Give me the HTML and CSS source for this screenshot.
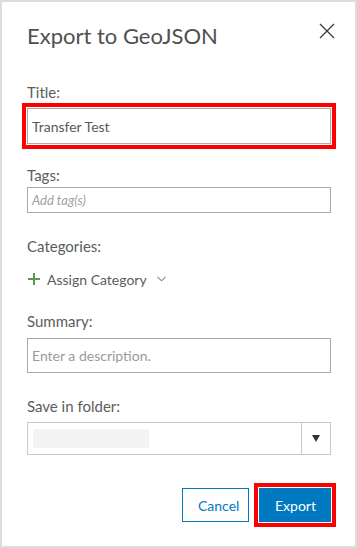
FILE: index.html
```html
<!DOCTYPE html>
<html lang="en">
<head>
    <meta charset="UTF-8">
    <meta name="viewport" content="width=device-width, initial-scale=1.0">
    <title>Export to GeoJSON</title>
    <link rel="stylesheet" href="styles.css">
</head>
<body>

    <div class="dialog">
        <div class="dialog-header">
            <h1 class="dialog-title">Export to GeoJSON</h1>
            <button class="close-button" aria-label="Close">
                <svg width="16" height="16" viewBox="0 0 16 16">
                    <path d="M1 1 L15 15 M15 1 L1 15" stroke="#3a3a3a" stroke-width="1.3" fill="none"/>
                </svg>
            </button>
        </div>

        <div class="field field-title">
            <label class="field-label">Title:</label>
            <div class="text-input title-input highlight">Transfer Test</div>
        </div>

        <div class="field field-tags">
            <label class="field-label">Tags:</label>
            <div class="text-input tags-input placeholder">Add tag(s)</div>
        </div>

        <div class="field field-categories">
            <label class="field-label">Categories:</label>
            <div class="assign-category">
                <svg class="plus-icon" width="12" height="12" viewBox="0 0 12 12">
                    <path d="M6 0 V12 M0 6 H12" stroke="#5a9a4f" stroke-width="2" fill="none"/>
                </svg>
                <span>Assign Category</span>
                <svg class="chevron-icon" width="9" height="6" viewBox="0 0 9 6">
                    <path d="M0.5 0.8 L4.5 4.8 L8.5 0.8" stroke="#8a8a8a" stroke-width="1.1" fill="none"/>
                </svg>
            </div>
        </div>

        <div class="field field-summary">
            <label class="field-label">Summary:</label>
            <div class="text-input summary-input placeholder-plain">Enter a description.</div>
        </div>

        <div class="field field-folder">
            <label class="field-label">Save in folder:</label>
            <div class="select-input">
                <div class="select-value">
                    <div class="folder-name"></div>
                </div>
                <div class="select-arrow">
                    <svg width="8" height="7" viewBox="0 0 8 7">
                        <path d="M0 0 H8 L4 7 Z" fill="#333"/>
                    </svg>
                </div>
            </div>
        </div>

        <div class="dialog-footer">
            <button class="btn btn-cancel">Cancel</button>
            <button class="btn btn-export highlight">Export</button>
        </div>
    </div>

</body>
</html>
```

FILE: styles.css
```css
body {
    margin: 0;
    font-family: Lato, "Noto Sans", sans-serif;
    color: #555;
    background-color: #fff;
}

.dialog {
    width: 357px;
    height: 548px;
    box-sizing: border-box;
    border: 2px solid #dcdcdc;
    padding: 0 24px 0 25px;
    background-color: #fff;
}

.dialog-header {
    display: flex;
    justify-content: space-between;
    align-items: center;
    margin-top: 20px;
    height: 28px;
}

.dialog-title {
    margin: 0;
    font-size: 22px;
    font-weight: normal;
    line-height: 28px;
    color: #505050;
}

.close-button {
    border: none;
    background: none;
    padding: 0;
    margin-right: -4px;
    margin-top: -10px;
    width: 16px;
    height: 16px;
    cursor: pointer;
}

.field-label {
    display: block;
    font-size: 15px;
    line-height: 20px;
    color: #5c5c5c;
}

.text-input {
    box-sizing: border-box;
    border: 1px solid #a9a9a9;
    padding: 0 4px;
    color: #5a5a5a;
    display: flex;
    align-items: center;
}

.field-title {
    margin-top: 32px;
}

.title-input {
    margin-top: 6px;
    height: 36px;
    font-size: 14px;
}

.highlight {
    outline: 4px solid #ff0000;
    outline-offset: 1px;
}

.field-tags {
    margin-top: 21px;
}

.tags-input {
    margin-top: 2px;
    height: 26px;
    font-size: 13px;
}

.placeholder {
    font-style: italic;
    color: #a0a0a0;
}

.field-categories {
    margin-top: 23px;
}

.assign-category {
    display: flex;
    align-items: center;
    margin-top: 13px;
    height: 20px;
    font-size: 14px;
    color: #5c5c5c;
    padding-left: 1px;
}

.plus-icon {
    margin-right: 7px;
}

.chevron-icon {
    margin-left: 10px;
}

.field-summary {
    margin-top: 22px;
}

.summary-input {
    margin-top: 7px;
    height: 35px;
    font-size: 14px;
}

.placeholder-plain {
    color: #9a9a9a;
}

.field-folder {
    margin-top: 23px;
}

.select-input {
    margin-top: 6px;
    height: 33px;
    box-sizing: border-box;
    border: 1px solid #c8c8c8;
    display: flex;
}

.select-value {
    flex: 1;
    display: flex;
    align-items: center;
    padding-left: 5px;
}

.folder-name {
    width: 116px;
    height: 19px;
    background-color: #f4f4f4;
}

.select-arrow {
    width: 28px;
    border-left: 1px solid #c8c8c8;
    display: flex;
    align-items: center;
    justify-content: center;
}

.dialog-footer {
    display: flex;
    justify-content: flex-end;
    gap: 10px;
    margin-top: 33px;
}

.btn {
    height: 34px;
    box-sizing: border-box;
    font-family: Lato, "Noto Sans", sans-serif;
    font-size: 14px;
    cursor: pointer;
    padding: 0 15px;
}

.btn-cancel {
    background-color: #fff;
    color: #0079c1;
    border: 1px solid #0079c1;
    width: 67px;
}

.btn-export {
    background-color: #0079c1;
    color: #fff;
    border: 1px solid #0079c1;
    width: 72px;
}
```
